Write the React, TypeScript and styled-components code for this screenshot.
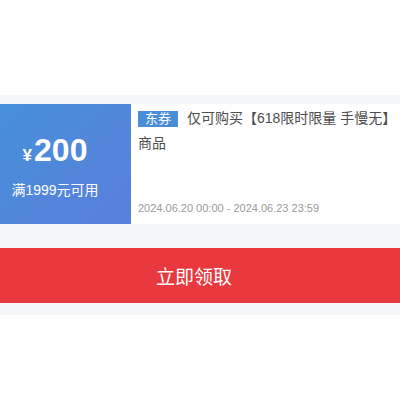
import React from "react";
import styled, { createGlobalStyle } from "styled-components";

const Global = createGlobalStyle`
  html, body { margin: 0; padding: 0; background: #ffffff; }
  body { font-family: "Liberation Sans", "Noto Sans CJK SC", sans-serif; overflow: hidden; }
`;

const Page = styled.div`
  width: 400px;
  overflow: hidden;
  padding-top: 95px;
`;

const Section = styled.div`
  background: #f5f6f8;
  padding: 9px 0 12px;
  display: flex;
  flex-direction: column;
  gap: 24px;
`;

const Card = styled.div`
  display: flex;
  height: 120px;
  width: 411px;
`;

const Value = styled.div`
  flex: 0 0 131px;
  background: linear-gradient(135deg, #4790da 0%, #5a7fdc 100%);
  color: #ffffff;
  display: flex;
  flex-direction: column;
  align-items: center;
  justify-content: center;
  padding-right: 21px;
  box-sizing: border-box;
`;

const Amount = styled.div`
  display: flex;
  align-items: baseline;
  line-height: 34px;
  margin-top: 4px;
`;

const Yen = styled.span`
  font-size: 17px;
  font-weight: bold;
  margin-right: 2px;
`;

const Num = styled.span`
  font-size: 32px;
  font-weight: bold;
`;

const Cond = styled.div`
  font-size: 14px;
  line-height: 18px;
  margin-top: 8px;
  white-space: nowrap;
`;

const Info = styled.div`
  flex: 0 0 280px;
  background: #ffffff;
  box-sizing: border-box;
  padding: 2px 4px 10px 7px;
  display: flex;
  flex-direction: column;
`;

const Title = styled.div`
  font-size: 14px;
  line-height: 25px;
  color: #4d4d4d;
`;

const Tag = styled.span`
  display: inline-block;
  background: #4a8dd7;
  color: #ffffff;
  font-size: 13px;
  line-height: 16px;
  height: 16px;
  padding: 0 7px;
  margin-right: 9px;
`;

const DateText = styled.div`
  margin-top: auto;
  font-size: 11px;
  line-height: 12px;
  color: #9a9a9a;
  white-space: nowrap;
`;

const Button = styled.div`
  height: 55px;
  background: #e9383e;
  color: #ffffff;
  font-family: "Noto Sans CJK SC", sans-serif;
  font-size: 19px;
  display: flex;
  align-items: center;
  justify-content: center;
  padding-right: 12px;
`;

export default function App() {
  return (
    <>
      <Global />
      <Page>
        <Section>
          <Card>
            <Value>
              <Amount>
                <Yen>¥</Yen>
                <Num>200</Num>
              </Amount>
              <Cond>满1999元可用</Cond>
            </Value>
            <Info>
              <Title>
                <Tag>东券</Tag>仅可购买【618限时限量 手慢无】商品
              </Title>
              <DateText>2024.06.20 00:00 - 2024.06.23 23:59</DateText>
            </Info>
          </Card>
          <Button>立即领取</Button>
        </Section>
      </Page>
    </>
  );
}
